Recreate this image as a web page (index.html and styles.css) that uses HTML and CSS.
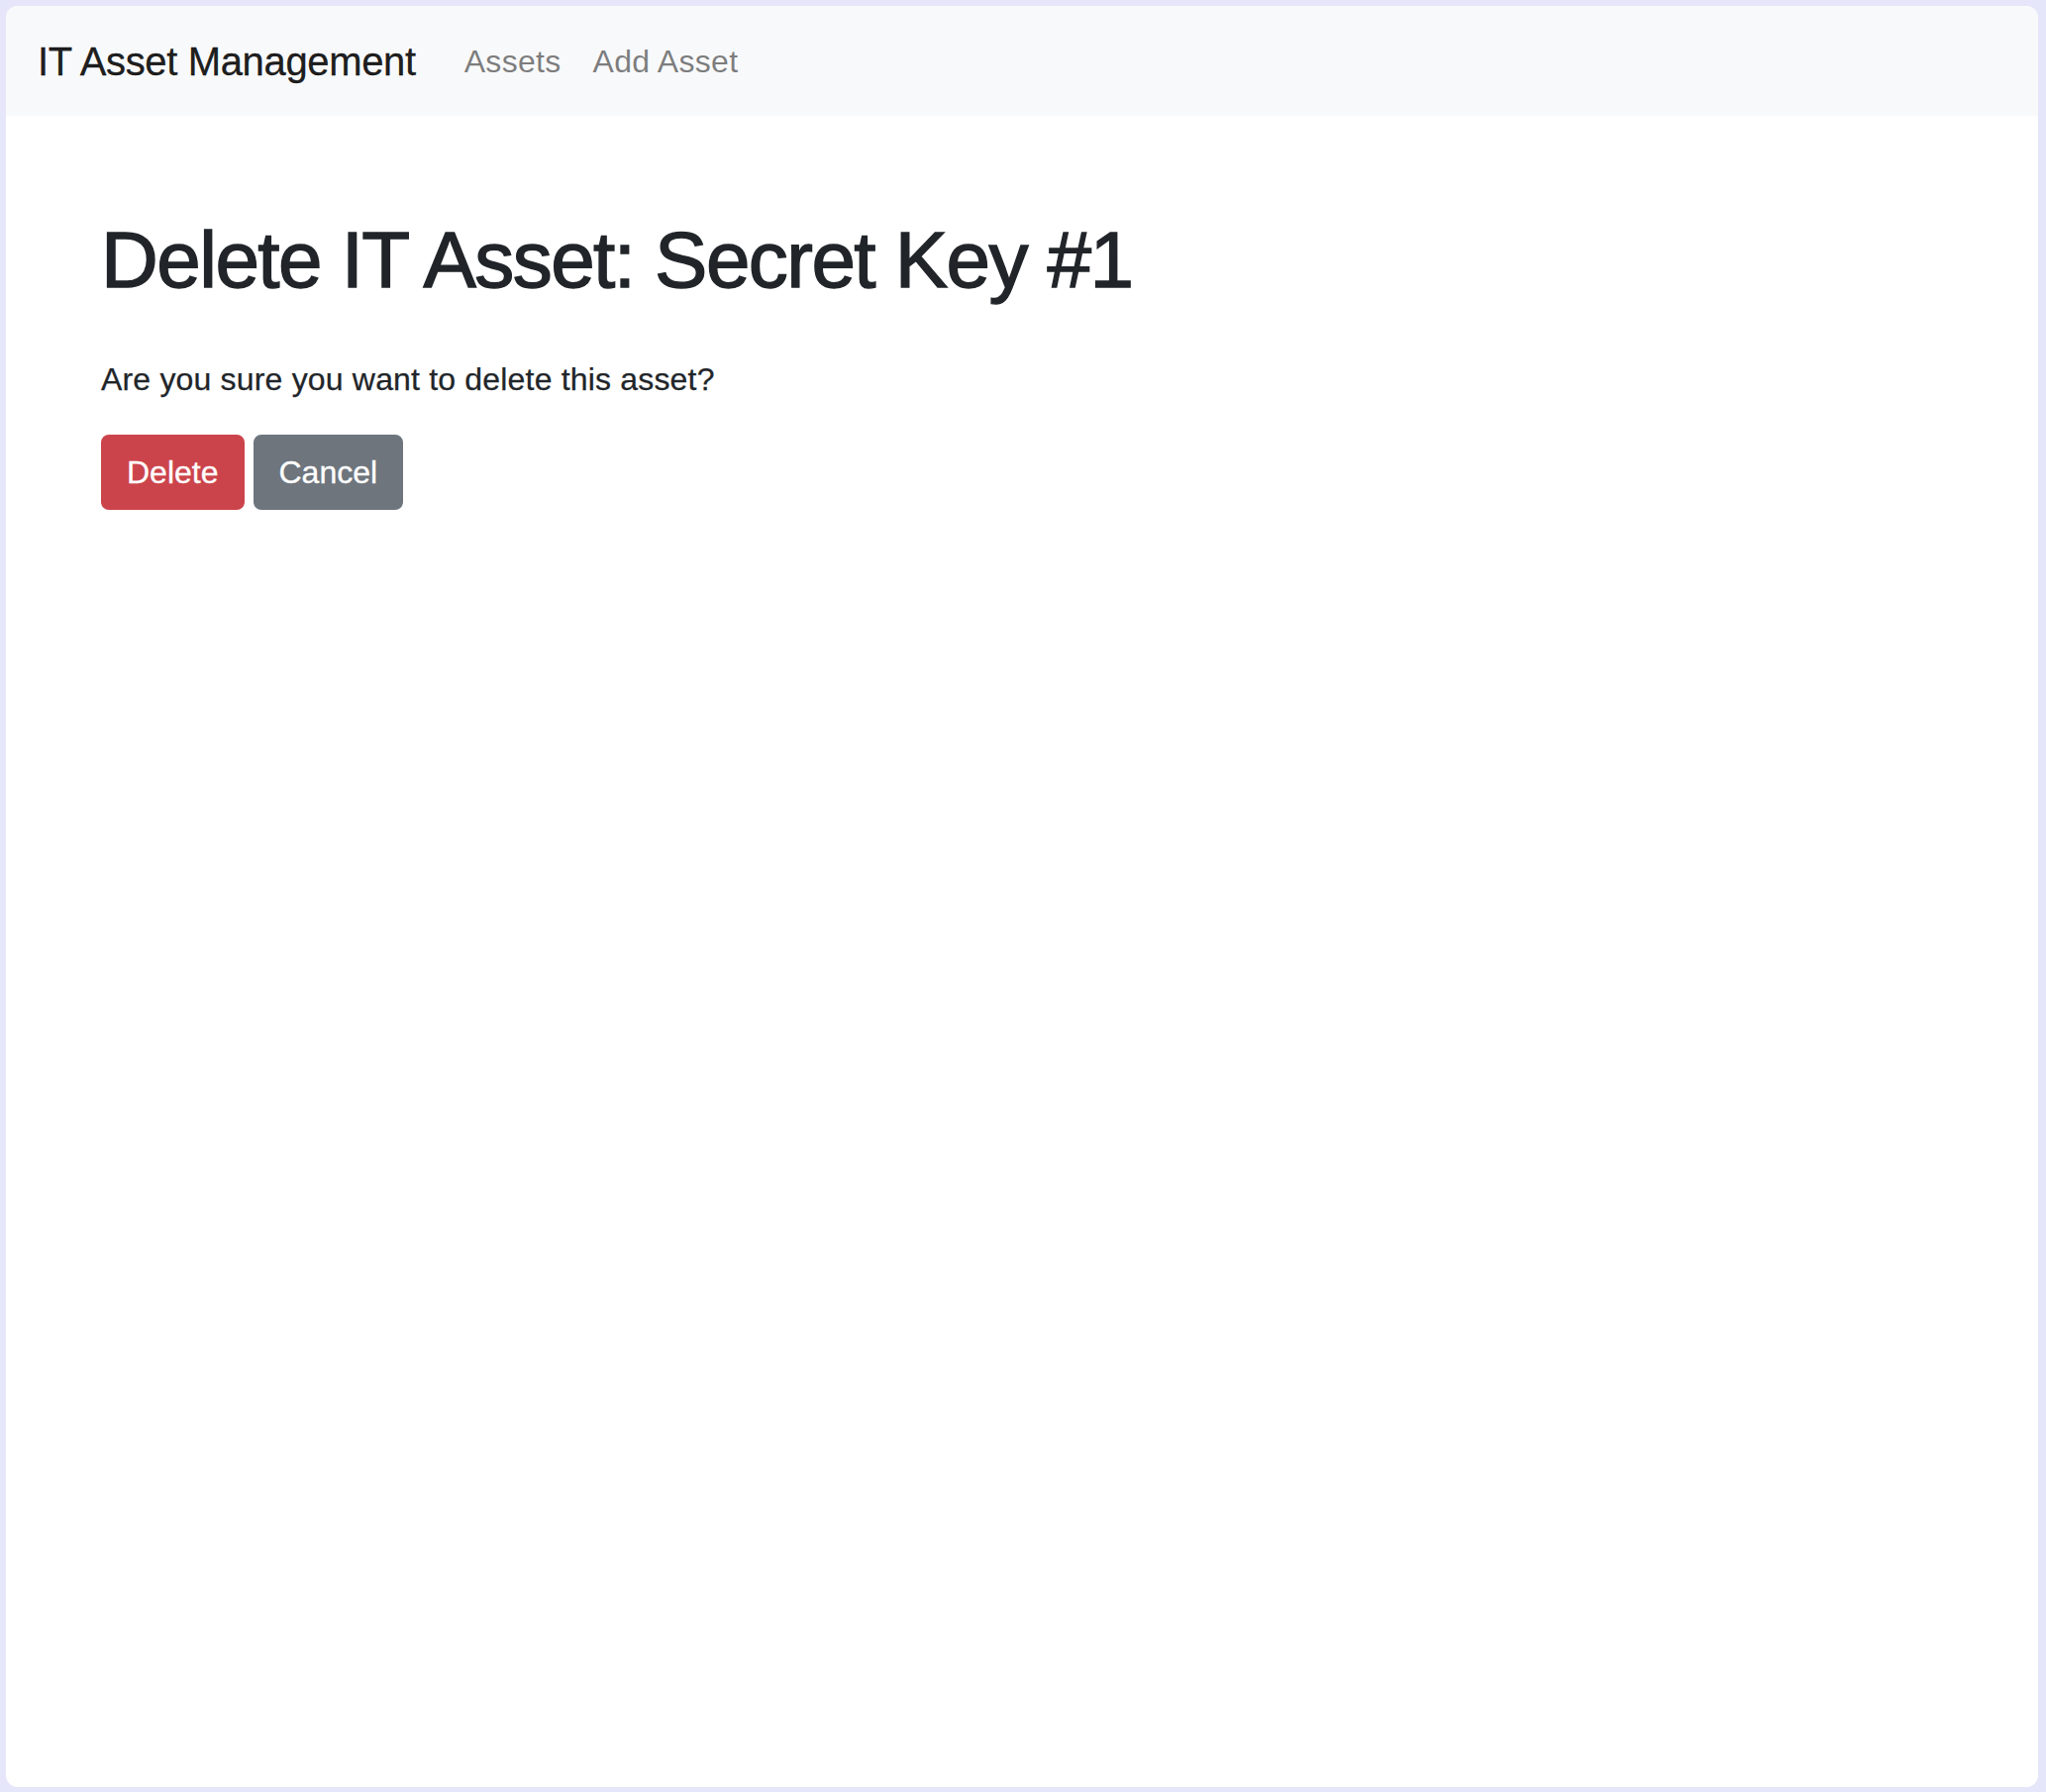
FILE: index.html
```html
<!DOCTYPE html>
<html lang="en">
<head>
<meta charset="utf-8">
<title>Delete IT Asset</title>
<link rel="stylesheet" href="styles.css">
</head>
<body>
<div class="window">
  <nav class="navbar">
    <a class="brand" href="#">IT Asset Management</a>
    <ul class="nav">
      <li><a class="nav-link" href="#">Assets</a></li>
      <li><a class="nav-link" href="#">Add Asset</a></li>
    </ul>
  </nav>
  <main class="container">
    <h1 class="title">Delete IT Asset: Secret Key #1</h1>
    <p class="question">Are you sure you want to delete this asset?</p>
    <form class="actions">
      <button type="button" class="btn btn-danger">Delete</button>
      <a class="btn btn-secondary" href="#">Cancel</a>
    </form>
  </main>
</div>
</body>
</html>
```

FILE: styles.css
```css
* { box-sizing: border-box; }
html, body { margin: 0; padding: 0; }
body {
  background: #e6e6fa;
  padding: 6px 8px 5px 6px;
  font-family: "Liberation Sans", Arial, Helvetica, sans-serif;
  color: #212529;
}
.window {
  background: #ffffff;
  border-radius: 12px;
  overflow: hidden;
  height: 1799px;
}
.navbar {
  display: flex;
  align-items: center;
  background: #f8f9fa;
  padding: 16px 32px;
  height: 111px;
}
.brand {
  font-size: 40px;
  line-height: 60px;
  padding: 10px 0;
  margin-right: 33px;
  color: rgba(0, 0, 0, 0.9);
  text-decoration: none;
  letter-spacing: -0.35px;
  -webkit-text-stroke: 0.3px rgba(0, 0, 0, 0.9);
}
.nav {
  display: flex;
  list-style: none;
  margin: 0;
  padding: 0;
}
.nav-link {
  display: block;
  font-size: 32px;
  line-height: 48px;
  padding: 16px 16px;
  color: rgba(0, 0, 0, 0.5);
  text-decoration: none;
  letter-spacing: 0.3px;
}
.container {
  max-width: 1920px;
  margin: 98px auto 0;
  padding: 0 30px;
}
.title {
  font-size: 80px;
  line-height: 96px;
  font-weight: 500;
  letter-spacing: -1.55px;
  margin: 0 0 48px;
  color: #212529;
  -webkit-text-stroke: 1.4px #212529;
}
.question {
  font-size: 32px;
  line-height: 48px;
  margin: 0 0 32px;
  letter-spacing: 0.18px;
  -webkit-text-stroke: 0.25px #212529;
}
.actions {
  display: flex;
  gap: 9px;
}
.btn {
  display: inline-block;
  font-family: inherit;
  font-size: 32px;
  line-height: 48px;
  font-weight: 400;
  padding: 12px 24px;
  border: 2px solid transparent;
  border-radius: 8px;
  color: #ffffff;
  text-decoration: none;
  cursor: pointer;
  -webkit-text-stroke: 0.3px #ffffff;
}
.btn-danger {
  background: #cc444b;
  border-color: #cc444b;
}
.btn-secondary {
  background: #6e757d;
  border-color: #6e757d;
}
```
